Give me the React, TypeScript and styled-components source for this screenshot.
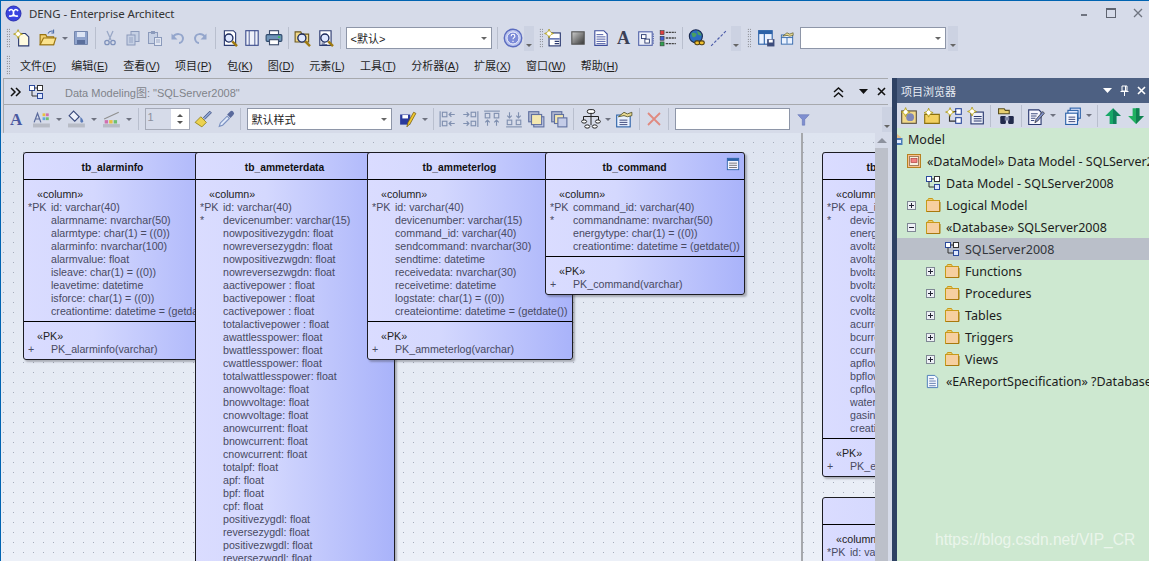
import React from 'react';
import styled, { createGlobalStyle } from 'styled-components';

const CJK = `"Noto Sans", "Noto Sans CJK SC", sans-serif`;
const ARIAL = `"Liberation Sans", "Noto Sans CJK SC", sans-serif`;

const GlobalStyle = createGlobalStyle`
  html, body {
    margin: 0;
    padding: 0;
    width: 1149px;
    height: 561px;
    overflow: hidden;
    background: #d6dbe9;
  }
`;

const Svg = ({ children, size = 16 }: { children: React.ReactNode; size?: number }) => (
  <svg width={size} height={size} viewBox="0 0 16 16" fill="none">
    {children}
  </svg>
);

const Star = ({ x = 4, y = 4, r = 3.5 }: { x?: number; y?: number; r?: number }) => (
  <>
    <path
      d={`M${x} ${y - r}L${x + r * 0.3} ${y - r * 0.3}L${x + r} ${y}L${x + r * 0.3} ${y + r * 0.3}L${x} ${y + r}L${x - r * 0.3} ${y + r * 0.3}L${x - r} ${y}L${x - r * 0.3} ${y - r * 0.3}Z`}
      fill="#fff27a"
      stroke="#a08a10"
      strokeWidth=".6"
    />
    <circle cx={x} cy={y} r={r * 0.45} fill="#fff" />
  </>
);

const Mag = () => (
  <>
    <circle cx="7" cy="8" r="3.6" fill="#dfe8ff" stroke="#1c2a5c" strokeWidth="1.2" />
    <path d="M10 11l4.2 4.2" stroke="#a07a10" strokeWidth="2.2" />
  </>
);

const Folder = () => (
  <>
    <path d="M2.500 3.500l1-2h4l1 2z" fill="#f2d070" stroke="#c79a1a" />
    <rect x="1.500" y="3.500" width="13" height="11" fill="#f6cfa0" stroke="#c79a1a" />
    <path d="M2 14.500h13V5" stroke="#a8780e" />
  </>
);

const icons: Record<string, React.ReactNode> = {
  newDoc: (
    <Svg size={18}>
      <path d="M5 4h6l3 3v8H5z" fill="#fffbe0" stroke="#2b3a70" />
      <Star x={4.500} y={4.500} r={4} />
    </Svg>
  ),
  open: (
    <Svg size={18}>
      <path d="M1 5h5l1 2h6v7H1z" fill="#f2d070" stroke="#9a7410" />
      <path d="M1 14l3-6h11l-2 6z" fill="#fbe38e" stroke="#9a7410" />
      <path d="M8 4c1-2 3-2.500 5-2M13 .5v3h-2" stroke="#4a6aa8" strokeWidth=".9" />
    </Svg>
  ),
  save: (
    <Svg>
      <path d="M1.500 1.500h13v13h-13z" fill="#8fa3cc" stroke="#7486ad" />
      <rect x="4" y="2" width="8" height="5" fill="#dce4f4" />
      <rect x="4" y="10" width="8" height="4" fill="#5b6f9c" />
    </Svg>
  ),
  cut: (
    <Svg>
      <path d="M5 1l4 9M11 1l-4 9" stroke="#9aa8c6" strokeWidth="1.300" />
      <circle cx="5" cy="12.500" r="2.200" stroke="#7f92bc" strokeWidth="1.300" />
      <circle cx="11" cy="12.500" r="2.200" stroke="#7f92bc" strokeWidth="1.300" />
    </Svg>
  ),
  copy: (
    <Svg>
      <rect x="6" y="1.500" width="8" height="10" fill="#c6d0e4" stroke="#8b9abb" />
      <rect x="2" y="5" width="8" height="10" fill="#c6d0e4" stroke="#8b9abb" />
      <path d="M4 8h4M4 10h4M4 12h4" stroke="#8b9abb" strokeWidth=".8" />
    </Svg>
  ),
  paste: (
    <Svg>
      <rect x="1.500" y="2.500" width="9" height="11" fill="#c6d0e4" stroke="#8b9abb" />
      <rect x="4" y="1" width="4" height="3" fill="#8b9abb" />
      <rect x="7.500" y="7.500" width="7" height="8" fill="#e2e7f2" stroke="#8b9abb" />
      <path d="M9 10h4M9 12h4" stroke="#8b9abb" strokeWidth=".8" />
    </Svg>
  ),
  undo: (
    <Svg>
      <path d="M3 7c3-4 9-4 10 1 0 3-2 5-4 5" stroke="#94a6cc" strokeWidth="2" />
      <path d="M1.500 3.500v6h6z" fill="#94a6cc" />
    </Svg>
  ),
  redo: (
    <Svg>
      <path d="M13 7C10 3 4 3 3 8c0 3 2 5 4 5" stroke="#94a6cc" strokeWidth="2" />
      <path d="M14.500 3.500v6h-6z" fill="#94a6cc" />
    </Svg>
  ),
  docMag: (
    <Svg size={18}>
      <path d="M3 1.500h8l2 2v11H3z" fill="#fff" stroke="#2b3a70" />
      <Mag />
    </Svg>
  ),
  pages: (
    <Svg size={18}>
      <rect x="2.500" y="1.500" width="11" height="13" fill="#eef1fa" stroke="#3d4d8c" />
      <path d="M5.500 1.500v13M10.500 1.500v13" stroke="#3d4d8c" strokeWidth=".8" />
    </Svg>
  ),
  print: (
    <Svg size={18}>
      <rect x="4" y="1.500" width="8" height="4" fill="#fff" stroke="#3d4d6c" />
      <rect x="1" y="5" width="14" height="6" rx="1" fill="#6f94b8" stroke="#2f4a6c" />
      <rect x="4" y="9.500" width="8" height="4.500" fill="#fff" stroke="#3d4d6c" />
      <rect x="11.500" y="6.500" width="2" height="1.500" fill="#3fc060" />
    </Svg>
  ),
  folderMag: (
    <Svg size={18}>
      <path d="M1 2.500h5l1 2h6v7H1z" fill="#f2d98a" stroke="#6d5a20" />
      <Mag />
    </Svg>
  ),
  listMag: (
    <Svg size={18}>
      <path d="M2.500 1.500h10v13h-10z" fill="#fff" stroke="#2b3a70" />
      <path d="M4 12.500h3M4 14h5" stroke="#2b3a70" strokeWidth=".8" />
      <Mag />
    </Svg>
  ),
  help: (
    <Svg size={20}>
      <circle cx="8" cy="8" r="7" fill="#b9c3ec" stroke="#5b6cc0" strokeWidth="1.100" />
      <circle cx="8" cy="8" r="4.800" fill="#7c8bd8" stroke="#eef0ff" strokeWidth=".8" />
      <path d="M6.500 6.500c0-2 3-2 3 0 0 1.200-1.500 1.200-1.500 2.500M8 10.200v1" stroke="#fff" strokeWidth=".9" />
    </Svg>
  ),
  starList: (
    <Svg size={18}>
      <rect x="4.500" y="3.500" width="10" height="11.500" fill="#fff" stroke="#2b3a70" />
      <rect x="5" y="8" width="9" height="1.500" fill="#6c7cb8" />
      <path d="M9.500 11h4M9.500 13h4" stroke="#2b3a70" strokeWidth=".9" />
      <Star x={4.500} y={4} r={4} />
    </Svg>
  ),
  shade: (
    <Svg size={18}>
      <defs>
        <linearGradient id="sh" x1="0" y1="0" x2="1" y2="1">
          <stop offset="0" stopColor="#d0d0d0" />
          <stop offset="1" stopColor="#333" />
        </linearGradient>
      </defs>
      <rect x="2.500" y="2.500" width="11" height="11" fill="url(#sh)" stroke="#555" />
    </Svg>
  ),
  note: (
    <Svg size={18}>
      <path d="M2.500 1.500h8l3 3v10h-11z" fill="#fff" stroke="#3d4d9c" />
      <path d="M4 5h6M4 7h8M4 9h8M4 11h8M4 13h8" stroke="#3d4d9c" strokeWidth=".8" />
    </Svg>
  ),
  boxDoc: (
    <Svg size={18}>
      <rect x="1.500" y="2.500" width="12" height="12" fill="#eef1fa" stroke="#5566aa" />
      <rect x="4" y="5" width="4" height="3.500" fill="#fff" stroke="#2b3a70" strokeWidth=".8" />
      <rect x="7" y="9" width="4" height="3.500" fill="#fff" stroke="#2b3a70" strokeWidth=".8" />
      <path d="M14.500 4v9" stroke="#5566aa" strokeDasharray="1 1" />
    </Svg>
  ),
  checks: (
    <Svg size={18}>
      <rect x="1" y="1.500" width="3.500" height="3.500" fill="#e04040" stroke="#333" strokeWidth=".5" />
      <rect x="1" y="6.500" width="3.500" height="3.500" fill="#4060d0" stroke="#333" strokeWidth=".5" />
      <rect x="1" y="11.500" width="3.500" height="3.500" fill="#30a050" stroke="#333" strokeWidth=".5" />
      <path d="M6 3h9M6 8h9M6 13h9" stroke="#444" strokeWidth="1.300" strokeDasharray="2 .6" />
    </Svg>
  ),
  globe: (
    <Svg size={18}>
      <circle cx="7" cy="6.500" r="5.800" fill="#2c6cc0" stroke="#1a2a50" />
      <path d="M3 4c2-2 3 0 4 0s1 2-1 3-2 0-3-3zM8 2c2 0 4 2 4 4l-3-1z" fill="#4aa060" />
      <rect x="6" y="10.500" width="4.500" height="3.500" rx="1.700" fill="#f0c030" stroke="#4a3a10" />
      <rect x="10" y="10.500" width="4.500" height="3.500" rx="1.700" fill="#f0c030" stroke="#4a3a10" />
    </Svg>
  ),
  dashLine: (
    <Svg size={18}>
      <path d="M1 15L15 1" stroke="#4a5aa8" strokeDasharray="2.500 1.500" />
    </Svg>
  ),
  layoutSave: (
    <Svg size={18}>
      <rect x="1.500" y="1.500" width="12" height="12" fill="#eaf2ff" stroke="#2c62a8" />
      <rect x="1.500" y="1.500" width="12" height="3" fill="#2c62a8" />
      <path d="M6.500 4.500v9" stroke="#2c62a8" />
      <rect x="9" y="9" width="6.500" height="6.500" fill="#3d4d7c" />
      <rect x="10.500" y="9.500" width="3.500" height="2.500" fill="#fff" />
    </Svg>
  ),
  handshake: (
    <Svg size={18}>
      <rect x="1.500" y="4.500" width="13" height="10.500" fill="#eaf2ff" stroke="#2c62a8" />
      <path d="M1.500 7.500h13M8 7.500v7" stroke="#2c62a8" />
      <path d="M3 6l5-4 3 1.500 4-1.500v3l-4 1-3-1z" fill="#e8d890" stroke="#4a4a20" strokeWidth=".7" />
    </Svg>
  ),
  handshakeDoc: (
    <Svg size={18}>
      <rect x="1.500" y="4.500" width="12" height="10.500" fill="#eaf2ff" stroke="#2c62a8" />
      <path d="M4 9h7M4 11h7M4 13h7" stroke="#2c3a70" strokeWidth=".8" />
      <path d="M3 6l5-4 3 1.500 4-1.500v3l-4 1-3-1z" fill="#e8d890" stroke="#4a4a20" strokeWidth=".7" />
    </Svg>
  ),
  fontColor: (
    <Svg size={18}>
      <rect x="0" y="12" width="15" height="3.500" fill="#b8bcc6" />
      <path d="M1 11l3-8 3 8M2.500 8h3" stroke="#5a6a9c" strokeWidth="1.100" />
      <rect x="8.500" y="3" width="2.500" height="2.500" fill="#e8c040" />
      <rect x="11.500" y="3" width="2.500" height="2.500" fill="#d070b0" />
      <rect x="8.500" y="6.500" width="2.500" height="2.500" fill="#60a8e0" />
      <rect x="11.500" y="6.500" width="2.500" height="2.500" fill="#70c070" />
    </Svg>
  ),
  fill: (
    <Svg size={18}>
      <rect x="0" y="12" width="15" height="3.500" fill="#b8bcc6" />
      <path d="M5 1l5 5-4 4-5-5z" fill="#eef1fa" stroke="#3a4a7c" />
      <path d="M11 6c2 2 2.500 3 2.500 4a1 1 0 0 1-2.500 0z" fill="#5a7ab8" />
    </Svg>
  ),
  lineColor: (
    <Svg size={18}>
      <rect x="0" y="12.500" width="15" height="3" fill="#b8bcc6" />
      <path d="M1 8l13-6" stroke="#909090" />
      <rect x="1.500" y="9" width="3" height="3" fill="#d070b0" />
      <rect x="5.500" y="9" width="3" height="3" fill="#e8c040" />
      <rect x="9.500" y="9" width="3" height="3" fill="#70c070" />
    </Svg>
  ),
  brush: (
    <Svg size={18}>
      <path d="M1 11l5-5 5 5-4 4z" fill="#ecd250" stroke="#8a7a10" strokeWidth=".7" />
      <path d="M8 7l6-6 1.500 1.500-6 6" fill="#8aa0d0" stroke="#3a4a7c" strokeWidth=".7" />
    </Svg>
  ),
  dropper: (
    <Svg size={18}>
      <path d="M2 14.500l1-3 6-6 2 2-6 6z" fill="#dfe8f8" stroke="#7a90c0" />
      <path d="M9 4l2.500-2.500a1.500 1.500 0 0 1 3 3L12 7z" fill="#5a6a9c" />
    </Svg>
  ),
  savePen: (
    <Svg size={18}>
      <rect x="1" y="4" width="9" height="9" fill="#2a3a9c" />
      <rect x="3" y="4.500" width="5" height="3" fill="#fff" />
      <path d="M7 15l1-4 5-9 2 1-5 9z" fill="#f0c830" stroke="#7a6010" strokeWidth=".7" />
    </Svg>
  ),
  alignA: (
    <Svg size={18}>
      <path d="M1 1v14" stroke="#8090b0" />
      <rect x="3" y="2" width="4" height="4" stroke="#8090b0" />
      <rect x="3" y="10" width="4" height="4" stroke="#8090b0" />
      <path d="M14 4H9m2-2L9 4l2 2M14 12H9m2-2l-2 2 2 2" stroke="#8090b0" />
    </Svg>
  ),
  alignB: (
    <Svg size={18}>
      <path d="M15 1v14" stroke="#8090b0" />
      <rect x="9" y="2" width="4" height="4" stroke="#8090b0" />
      <rect x="9" y="10" width="4" height="4" stroke="#8090b0" />
      <path d="M2 4h5M5 2l2 2-2 2M2 12h5M5 10l2 2-2 2" stroke="#8090b0" />
    </Svg>
  ),
  alignC: (
    <Svg size={18}>
      <path d="M1 1h14" stroke="#8090b0" />
      <rect x="2" y="3" width="4" height="4" stroke="#8090b0" />
      <rect x="10" y="3" width="4" height="4" stroke="#8090b0" />
      <path d="M4 14V9M2 11l2-2 2 2M12 14V9M10 11l2-2 2 2" stroke="#8090b0" />
    </Svg>
  ),
  alignD: (
    <Svg size={18}>
      <path d="M1 15h14" stroke="#8090b0" />
      <rect x="2" y="9" width="4" height="4" stroke="#8090b0" />
      <rect x="10" y="9" width="4" height="4" stroke="#8090b0" />
      <path d="M4 2v5M2 5l2 2 2-2M12 2v5M10 5l2 2 2-2" stroke="#8090b0" />
    </Svg>
  ),
  front: (
    <Svg size={18}>
      <rect x="6" y="6" width="9" height="9" fill="#c4cce8" stroke="#6070a0" />
      <rect x="1.500" y="1.500" width="9" height="9" fill="#b0b8d0" stroke="#6070a0" />
      <rect x="4" y="4" width="9" height="9" fill="#f4e8b0" stroke="#6070a0" />
    </Svg>
  ),
  back: (
    <Svg size={18}>
      <rect x="1.500" y="1.500" width="9" height="9" fill="#b0b8d0" stroke="#6070a0" />
      <rect x="4" y="4" width="8" height="8" fill="#f4e8b0" stroke="#6070a0" />
      <rect x="7" y="7" width="8" height="8" fill="#c4cce8" stroke="#6070a0" />
    </Svg>
  ),
  org: (
    <Svg size={20}>
      <rect x="5" y=".5" width="6" height="3" rx="1.500" fill="#fff" stroke="#222" strokeWidth=".8" />
      <path d="M8 3.500V6M2 9V6h12v3M8 6v7" stroke="#222" strokeWidth=".8" />
      <ellipse cx="2.500" cy="10" rx="2" ry="1.300" fill="#fff" stroke="#222" strokeWidth=".8" />
      <ellipse cx="13.500" cy="10" rx="2" ry="1.300" fill="#fff" stroke="#222" strokeWidth=".8" />
      <ellipse cx="5" cy="14" rx="2" ry="1.300" fill="#fff" stroke="#222" strokeWidth=".8" />
      <ellipse cx="11" cy="14" rx="2" ry="1.300" fill="#fff" stroke="#222" strokeWidth=".8" />
    </Svg>
  ),
  redX: (
    <Svg size={16}>
      <path d="M2 2l12 12M14 2L2 14" stroke="#e08a80" strokeWidth="1.800" />
    </Svg>
  ),
  funnel: (
    <Svg size={13}>
      <path d="M1 2h14L9.500 8v7h-3V8z" fill="#7f8fd0" stroke="#5a6ab0" strokeWidth=".6" />
    </Svg>
  ),
  diagram: (
    <Svg size={16}>
      <rect x="1.500" y="1.500" width="5" height="5" fill="#fff" stroke="#2c4a9c" />
      <rect x="9.500" y="1.500" width="5" height="5" fill="#fff" stroke="#333" />
      <rect x="9.500" y="9.500" width="5" height="5" fill="#dfe8ff" stroke="#2c4a9c" />
      <path d="M6.500 4h3M4 6.500V12h5.500" stroke="#333" />
    </Svg>
  ),
  addPackage: (
    <Svg size={18}>
      <rect x="1.500" y="3.500" width="13" height="11" fill="#f2d98a" stroke="#5a5040" />
      <circle cx="9" cy="9" r="3.500" fill="#8088b8" />
      <Star x={5} y={4.500} r={4} />
    </Svg>
  ),
  addFolder: (
    <Svg size={18}>
      <path d="M1.500 6.500h13v8h-13z" fill="#f2d060" stroke="#8a7010" />
      <Star x={5} y={5} r={4} />
    </Svg>
  ),
  addDiagram: (
    <Svg size={18}>
      <rect x="9.500" y="1.500" width="5" height="5" fill="#fff" stroke="#2c4a9c" />
      <rect x="9.500" y="9.500" width="5" height="5" fill="#fff" stroke="#2c4a9c" />
      <path d="M7 4h3M4 7v5.500h5.500" stroke="#333" />
      <Star x={4.500} y={4.500} r={4} />
    </Svg>
  ),
  addElement: (
    <Svg size={18}>
      <rect x="3.500" y="4.500" width="11" height="10.500" fill="#eef1fa" stroke="#2b3a70" />
      <path d="M6 8.500h7M6 10.500h7M6 12.500h7" stroke="#2b3a70" strokeWidth=".9" />
      <Star x={4.500} y={4} r={4} />
    </Svg>
  ),
  binoculars: (
    <Svg size={18}>
      <path d="M.5 1.500h5l1 1.500H10v3H.5z" fill="#e8d070" stroke="#5a5020" />
      <rect x="2" y="8" width="5" height="7" rx="1" fill="#222a4c" />
      <rect x="9" y="8" width="5" height="7" rx="1" fill="#222a4c" />
      <rect x="6" y="9" width="4" height="3" fill="#8088a8" />
    </Svg>
  ),
  editDoc: (
    <Svg size={18}>
      <path d="M1.500 2.500h9l2 2v11h-11z" fill="#f6f6ff" stroke="#2b3a70" />
      <path d="M3.500 6h6M3.500 8h5M3.500 10h4M3.500 12h3" stroke="#2b3a70" strokeWidth=".8" />
      <path d="M7 14l1-3 6-7 1.500 1.500-6 7z" fill="#8090c8" stroke="#222" strokeWidth=".6" />
    </Svg>
  ),
  windows: (
    <Svg size={18}>
      <rect x="5.500" y="1" width="9" height="9" fill="#dfe8ff" stroke="#2c62a8" />
      <rect x="3.500" y="3" width="9" height="9" fill="#dfe8ff" stroke="#2c62a8" />
      <rect x="1.500" y="5.500" width="10.500" height="10" fill="#f6f8ff" stroke="#2c62a8" />
      <path d="M4 9h6M4 11h6M4 13h6" stroke="#2b3a70" strokeWidth=".8" />
    </Svg>
  ),
  up: (
    <Svg size={18}>
      <path d="M8 1l7 7h-4v7H5V8H1z" fill="#18a868" />
      <path d="M8 1l7 7h-4v7H8z" fill="#10805a" />
    </Svg>
  ),
  down: (
    <Svg size={18}>
      <path d="M8 15L1 8h4V1h6v7h4z" fill="#20b060" />
      <path d="M8 15l7-7h-4V1H8z" fill="#108050" />
    </Svg>
  ),
  logo: (
    <svg width="17" height="17" viewBox="0 0 17 17" fill="none">
      <circle cx="8.500" cy="8.500" r="7.500" fill="#3a44e0" stroke="#2a30b0" />
      <path d="M4 6c2-3 5-1 4.500 2.500S13 11 13 11M13 6c-2-3-5-1-4.500 2.500S4 11 4 11" stroke="#fff" strokeWidth="1.600" />
    </svg>
  ),
  packageBox: (
    <Svg size={16}>
      <rect x="1.500" y="1.500" width="13" height="13" fill="#f8c090" stroke="#b88020" />
      <rect x="3.500" y="3.500" width="9" height="9" fill="#f8f0e0" stroke="#a08060" />
      <rect x="5" y="5.500" width="6" height="4" fill="#f08080" stroke="#b04040" strokeWidth=".7" />
    </Svg>
  ),
  folder: (
    <Svg size={16}>
      <Folder />
    </Svg>
  ),
  report: (
    <Svg size={15}>
      <path d="M2.500 1.500h8l3 3v10h-11z" fill="#f4f8ff" stroke="#4a7ab8" />
      <path d="M4.500 5h5M4.500 7.500h7M4.500 10h7M4.500 12.500h7" stroke="#3a5a98" strokeWidth=".8" />
    </Svg>
  ),
  tableMark: (
    <Svg size={14}>
      <rect x="1.500" y="1.500" width="13" height="13" fill="#f4f6ff" stroke="#2c62a8" />
      <rect x="1.500" y="1.500" width="13" height="3" fill="#2c62a8" />
      <path d="M3.500 7h9M3.500 9.500h9M3.500 12h9" stroke="#444" strokeWidth=".8" />
    </Svg>
  ),
  modelRoot: (
    <svg width="6" height="14" viewBox="0 0 6 14" fill="none">
      <path d="M0 2l4 3v2H0z" fill="#e8c088" />
      <path d="M0 6h5.500v7H0z" fill="#4a7ab8" />
      <path d="M0 8h4v3H0z" fill="#dfe8ff" />
    </svg>
  ),
};

const Window = styled.div`
  width: 1149px;
  height: 561px;
  box-sizing: border-box;
  border-top: 1px solid #0063b1;
  border-left: 1px solid #0063b1;
  background: #d6dbe9;
  display: flex;
  flex-direction: column;
  overflow: hidden;
  position: relative;
  font-family: ${CJK};
`;

const TitleBar = styled.div`
  height: 24px;
  display: flex;
  align-items: center;
  padding-left: 4px;
  gap: 7px;
  font-size: 11.500px;
  letter-spacing: -0.1px;
  color: #333;
  flex: none;
`;

const TitleText = styled.span`
  flex: 1;
`;

const WindowButtons = styled.div`
  display: flex;
  align-items: center;
  gap: 17px;
  padding-right: 6px;
`;

const Toolbar = styled.div`
  height: 26px;
  display: flex;
  align-items: center;
  flex: none;
`;

const Gripper = styled.span<{ $ml?: number }>`
  width: 4px;
  height: 20px;
  margin: 0 1px 0 ${(p) => p.$ml ?? 5}px;
  flex: none;
  background-image: radial-gradient(#555 0.6px, transparent 0.8px);
  background-size: 2.500px 2.500px;
`;

const Tool = styled.span<{ $w?: number; $ml?: number }>`
  width: ${(p) => p.$w ?? 22.5}px;
  margin-left: ${(p) => p.$ml ?? 0}px;
  height: 22px;
  display: flex;
  align-items: center;
  justify-content: center;
  flex: none;
`;

const Arrow = styled.span<{ $w?: number; $ml?: number }>`
  width: ${(p) => p.$w ?? 10}px;
  margin-left: ${(p) => p.$ml ?? 0}px;
  height: 22px;
  flex: none;
  display: flex;
  align-items: center;
  justify-content: center;
  &::after {
    content: '';
    border-left: 3.500px solid transparent;
    border-right: 3.500px solid transparent;
    border-top: 3.500px solid #6e7280;
  }
`;

const DropTile = styled.span<{ $ml?: number }>`
  width: 10px;
  height: 25px;
  margin-left: ${(p) => p.$ml ?? 0}px;
  background: #ccd2e2;
  flex: none;
  display: flex;
  align-items: flex-end;
  justify-content: center;
  padding-bottom: 4px;
  box-sizing: border-box;
  &::after {
    content: '';
    border-left: 3px solid transparent;
    border-right: 3px solid transparent;
    border-top: 3px solid #666;
  }
`;

const Sep = styled.span<{ $m?: number }>`
  width: 1px;
  height: 22px;
  margin: 0 ${(p) => p.$m ?? 3}px;
  background: #b9bfce;
  flex: none;
`;

const Combo = styled.div<{ $w: number; $ml?: number }>`
  width: ${(p) => p.$w}px;
  margin-left: ${(p) => p.$ml ?? 3}px;
  height: 22px;
  box-sizing: border-box;
  border: 1px solid #8e96a8;
  background: #fff;
  display: flex;
  align-items: center;
  padding: 0 4px;
  font-size: 11px;
  color: #222;
  flex: none;
  font-family: ${ARIAL};
  span {
    flex: 1;
  }
  &[data-arrow='true']::after {
    content: '';
    border-left: 3.500px solid transparent;
    border-right: 3.500px solid transparent;
    border-top: 3.500px solid #666;
  }
`;

const Menu = styled.div`
  height: 27px;
  flex: none;
  display: flex;
  align-items: center;
  font-size: 11px;
  color: #1e1e1e;
  font-family: ${ARIAL};
`;

const MenuList = styled.div`
  display: flex;
  gap: 15.200px;
  margin-left: 9px;
`;

const Main = styled.div`
  flex: 1;
  display: flex;
  min-height: 0;
`;

const DiagramPane = styled.div`
  width: 887px;
  flex: none;
  display: flex;
  flex-direction: column;
  min-height: 0;
`;

const DiagramHeader = styled.div`
  height: 27px;
  margin-left: 2px;
  box-sizing: border-box;
  border-top: 1px solid #a7a9ad;
  border-left: 1px solid #a7a9ad;
  border-bottom: 1px solid #a7a9ad;
  display: flex;
  align-items: center;
  flex: none;
  padding-left: 6px;
  font-family: ${ARIAL};
`;

const DiagramTitle = styled.span`
  flex: 1;
  font-size: 11px;
  color: #80838a;
  margin-left: 18px;
`;

const HeaderGlyphs = styled.div`
  display: grid;
  grid-template-columns: 29px 21px 14px;
  justify-items: center;
  align-items: center;
`;

const DiagramTools = styled(Toolbar)`
  height: 28px;
  margin-left: 2px;
  padding-left: 1px;
  border-left: 1px solid #a7a9ad;
`;

const Spinner = styled.div`
  width: 45px;
  height: 22px;
  margin-left: 2px;
  box-sizing: border-box;
  border: 1px solid #a5aab8;
  display: flex;
  flex: none;
  font-family: ${ARIAL};
  font-size: 11px;
  color: #8b8f9c;
`;

const SpinValue = styled.span`
  flex: 1;
  padding: 2px 0 0 2px;
`;

const SpinButtons = styled.div`
  width: 18px;
  background: #fff;
  display: flex;
  flex-direction: column;
  align-items: center;
  justify-content: space-around;
  padding: 3px 0;
  box-sizing: border-box;
`;

const SpinArrow = styled.i<{ $up?: boolean }>`
  border-left: 3px solid transparent;
  border-right: 3px solid transparent;
  ${(p) => (p.$up ? 'border-bottom: 3px solid #555;' : 'border-top: 3px solid #555;')}
`;

const CanvasRow = styled.div`
  flex: 1;
  display: flex;
  min-height: 0;
`;

const Canvas = styled.div`
  flex: 1;
  position: relative;
  overflow: hidden;
  background-color: #e9edf6;
  background-image: radial-gradient(circle at 0.5px 0.5px, #a6adbc 0.7px, transparent 0.71px),
    linear-gradient(#dee4f0 0, #e6ebf4 60%, #ecf0f8 100%);
  background-size: 10px 10px, 100% 100%;
  background-position: 2px 9px, 0 0;
`;

const PageLine = styled.div`
  position: absolute;
  left: 800px;
  top: 0;
  bottom: 0;
  width: 2px;
  background: #a6a8ac;
`;

const Scrollbar = styled.div`
  width: 13px;
  flex: none;
  background: #bcc0ca;
  display: flex;
  flex-direction: column;
`;

const ScrollUp = styled.div`
  height: 15px;
  background: #d6dbe9;
  display: flex;
  align-items: center;
  justify-content: center;
  &::after {
    content: '';
    border-left: 5px solid transparent;
    border-right: 5px solid transparent;
    border-bottom: 5px solid #8d929e;
  }
`;

const Splitter = styled.div`
  width: 5px;
  margin-left: 4px;
  flex: none;
  background: #2e4163;
`;

const BrowserPane = styled.div`
  flex: 1;
  display: flex;
  flex-direction: column;
  min-height: 0;
  min-width: 0;
`;

const BrowserTitle = styled.div`
  height: 25px;
  flex: none;
  background: #4d6082;
  color: #e8ecf4;
  display: flex;
  align-items: center;
  padding: 0 3px 0 4px;
  font-size: 11px;
`;

const BrowserTitleText = styled.span`
  flex: 1;
`;

const BrowserTitleIcons = styled.div`
  display: flex;
  align-items: center;
  gap: 7px;
`;

const BrowserTools = styled(Toolbar)`
  height: 25px;
  padding-left: 1px;
`;

const Tree = styled.div`
  flex: 1;
  background: #cde8d0;
  overflow: hidden;
  font-size: 12.500px;
  color: #1c1c1c;
`;

const Row = styled.div<{ $pad: number; $selected?: boolean }>`
  height: 22px;
  display: flex;
  align-items: center;
  padding-left: ${(p) => p.$pad}px;
  white-space: nowrap;
  background: ${(p) => (p.$selected ? '#babfc9' : 'transparent')};
  color: ${(p) => (p.$selected ? '#33363c' : '#1c1c1c')};
`;

const Expander = styled.span`
  width: 9px;
  height: 9px;
  box-sizing: border-box;
  border: 1px solid #7f8794;
  background: #eef1f6;
  margin-right: 9px;
  flex: none;
  position: relative;
  &::before {
    content: '';
    position: absolute;
    left: 1px;
    right: 1px;
    top: 3px;
    height: 1px;
    background: #223;
  }
  &[data-open='false']::after {
    content: '';
    position: absolute;
    top: 1px;
    bottom: 1px;
    left: 3px;
    width: 1px;
    background: #223;
  }
`;

const TreeIcon = styled.span<{ $w?: number }>`
  width: ${(p) => p.$w ?? 21}px;
  display: flex;
  align-items: center;
  flex: none;
`;

const Watermark = styled.div`
  position: absolute;
  left: 934px;
  top: 530px;
  font-family: ${ARIAL};
  font-size: 15.600px;
  color: rgba(255, 255, 255, 0.6);
`;

const TableBox = styled.div<{ $x: number; $y: number; $w: number }>`
  position: absolute;
  left: ${(p) => p.$x - 1}px;
  top: ${(p) => p.$y - 133}px;
  width: ${(p) => p.$w}px;
  box-sizing: border-box;
  border: 1px solid #1c1c22;
  border-radius: 3px;
  box-shadow: 2px 2px 2px rgba(60, 60, 70, 0.35);
  background: linear-gradient(90deg, #dadcff 0%, #d4d8fe 35%, #a9b3fa 100%);
  font-family: ${ARIAL};
  font-size: 10.670px;
  color: #484a62;
`;

const TableHead = styled.div`
  height: 24px;
  padding: 2px 21px 0 0;
  border-bottom: 1px solid #000;
  display: flex;
  align-items: center;
  justify-content: center;
  font-size: 10.300px;
  font-weight: 700;
  color: #111;
  position: relative;
`;

const TableMark = styled.span`
  position: absolute;
  right: 4px;
  top: 4px;
  display: flex;
`;

const Section = styled.div`
  padding: 8px 0 3px;
  & + & {
    border-top: 1px solid #000;
  }
`;

const Stereo = styled.div`
  height: 13px;
  line-height: 13px;
  padding-left: 13px;
  color: #222;
`;

const Field = styled.div`
  height: 13px;
  line-height: 13px;
  display: flex;
  white-space: nowrap;
  overflow: hidden;
`;

const Marker = styled.span`
  width: 23px;
  padding-left: 4px;
  flex: none;
`;

type TableProps = {
  x: number;
  y: number;
  w: number;
  name: string;
  mark?: boolean;
  fields: [string, string][];
  pk?: string;
};

const Table = ({ x, y, w, name, mark, fields, pk }: TableProps) => (
  <TableBox $x={x} $y={y} $w={w}>
    <TableHead>
      {name}
      {mark && <TableMark>{icons.tableMark}</TableMark>}
    </TableHead>
    <Section>
      <Stereo>«column»</Stereo>
      {fields.map(([m, f], i) => (
        <Field key={i}>
          <Marker>{m}</Marker>
          {f}
        </Field>
      ))}
    </Section>
    {pk && (
      <Section>
        <Stereo>«PK»</Stereo>
        <Field>
          <Marker>+</Marker>
          {pk}
        </Field>
      </Section>
    )}
  </TableBox>
);

const plain = (names: string[]): [string, string][] => names.map((n) => ['', n]);

const alarmFields: [string, string][] = [
  ['*PK', 'id: varchar(40)'],
  ...plain([
    'alarmname: nvarchar(50)',
    'alarmtype: char(1) = ((0))',
    'alarminfo: nvarchar(100)',
    'alarmvalue: float',
    'isleave: char(1) = ((0))',
    'leavetime: datetime',
    'isforce: char(1) = ((0))',
    'creationtime: datetime = (getdate())',
  ]),
];

const ammeterFields: [string, string][] = [
  ['*PK', 'id: varchar(40)'],
  ['*', 'devicenumber: varchar(15)'],
  ...plain([
    'nowpositivezygdn: float',
    'nowreversezygdn: float',
    'nowpositivezwgdn: float',
    'nowreversezwgdn: float',
    'aactivepower : float',
    'bactivepower : float',
    'cactivepower : float',
    'totalactivepower : float',
    'awattlesspower: float',
    'bwattlesspower: float',
    'cwattlesspower: float',
    'totalwattlesspower: float',
    'anowvoltage: float',
    'bnowvoltage: float',
    'cnowvoltage: float',
    'anowcurrent: float',
    'bnowcurrent: float',
    'cnowcurrent: float',
    'totalpf: float',
    'apf: float',
    'bpf: float',
    'cpf: float',
    'positivezygdl: float',
    'reversezygdl: float',
    'positivezwgdl: float',
    'reversezwgdl: float',
  ]),
];

const logFields: [string, string][] = [
  ['*PK', 'id: varchar(40)'],
  ...plain([
    'devicenumber: varchar(15)',
    'command_id: varchar(40)',
    'sendcommand: nvarchar(30)',
    'sendtime: datetime',
    'receivedata: nvarchar(30)',
    'receivetime: datetime',
    'logstate: char(1) = ((0))',
    'createiontime: datetime = (getdate())',
  ]),
];

const commandFields: [string, string][] = [
  ['*PK', 'command_id: varchar(40)'],
  ['*', 'commandname: nvarchar(50)'],
  ...plain(['energytype: char(1) = ((0))', 'creationtime: datetime = (getdate())']),
];

const epaFields: [string, string][] = [
  ['*PK', 'epa_id: varchar(40)'],
  ['*', 'devicenumber: varchar(15)'],
  ...plain([
    'energytype: char(1)',
    'avoltage: float',
    'avoltagerate: float',
    'bvoltage: float',
    'bvoltagerate: float',
    'cvoltage: float',
    'cvoltagerate: float',
    'acurrent: float',
    'bcurrent: float',
    'ccurrent: float',
    'apflow: float',
    'bpflow: float',
    'cpflow: float',
    'waterflow: float',
    'gasinflow: float',
    'creationtime: datetime',
  ]),
];

const TreeRow = ({
  pad,
  label,
  icon,
  open,
  selected,
  iconWidth,
}: {
  pad: number;
  label: string;
  icon?: string;
  open?: boolean;
  selected?: boolean;
  iconWidth?: number;
}) => (
  <Row $pad={pad} $selected={selected}>
    {open !== undefined && <Expander data-open={open} />}
    {icon && <TreeIcon $w={iconWidth}>{icons[icon]}</TreeIcon>}
    {label}
  </Row>
);

const menuItems: [string, string][] = [
  ['文件', 'F'],
  ['编辑', 'E'],
  ['查看', 'V'],
  ['项目', 'P'],
  ['包', 'K'],
  ['图', 'D'],
  ['元素', 'L'],
  ['工具', 'T'],
  ['分析器', 'A'],
  ['扩展', 'X'],
  ['窗口', 'W'],
  ['帮助', 'H'],
];

const Glyph = styled.span<{ $size?: number }>`
  font-family: "Liberation Serif", serif;
  font-weight: 700;
  font-size: ${(p) => p.$size ?? 17}px;
  line-height: 1;
  color: #4a58a0;
`;

const DarkGlyph = styled(Glyph)`
  color: #3a3f55;
`;

const HeaderChevron = () => (
  <svg width="13" height="12" viewBox="0 0 13 12" fill="none">
    <path d="M2 6l4.500-4L11 6M2 11l4.500-4L11 11" stroke="#111" strokeWidth="1.500" />
  </svg>
);

const HeaderDouble = () => (
  <svg width="12" height="10" viewBox="0 0 12 10" fill="none">
    <path d="M1 1l4 4-4 4M6 1l4 4-4 4" stroke="#111" strokeWidth="1.500" />
  </svg>
);

const Cross = ({ color = '#111' }: { color?: string }) => (
  <svg width="9" height="9" viewBox="0 0 9 9" fill="none">
    <path d="M1 1l7 7M8 1L1 8" stroke={color} strokeWidth="1.600" />
  </svg>
);

const Tri = ({ color = '#111' }: { color?: string }) => (
  <svg width="9" height="6" viewBox="0 0 9 6">
    <path d="M0 0h9L4.500 5z" fill={color} />
  </svg>
);

const Pin = () => (
  <svg width="11" height="11" viewBox="0 0 11 11" fill="none">
    <path d="M3 1h5v5H3zM1.500 6.500h8M5.500 6.500V11M6.500 1v5" stroke="#fff" />
  </svg>
);

export default function App() {
  return (
    <>
      <GlobalStyle />
      <Window>
        <TitleBar>
          {icons.logo}
          <TitleText>DENG - Enterprise Architect</TitleText>
          <WindowButtons>
            <svg width="10" height="10" viewBox="0 0 10 10">
              <rect x="2" y="6" width="6" height="2" fill="#6f7480" />
            </svg>
            <svg width="10" height="10" viewBox="0 0 10 10" fill="none">
              <rect x=".5" y=".5" width="9" height="9" stroke="#5f6470" />
              <rect x=".5" y=".5" width="9" height="1.500" fill="#5f6470" />
            </svg>
            <svg width="10" height="10" viewBox="0 0 10 10" fill="none">
              <path d="M1 1l8 8M9 1L1 9" stroke="#6f7480" strokeWidth="1.300" />
            </svg>
          </WindowButtons>
        </TitleBar>

        <Toolbar>
          <Gripper $ml={5} />
          <Tool>{icons.newDoc}</Tool>
          <Tool $w={24} $ml={2}>{icons.open}</Tool>
          <Arrow $w={10} />
          <Tool>{icons.save}</Tool>
          <Sep />
          <Tool>{icons.cut}</Tool>
          <Tool>{icons.copy}</Tool>
          <Tool>{icons.paste}</Tool>
          <Tool>{icons.undo}</Tool>
          <Tool>{icons.redo}</Tool>
          <Sep />
          <Tool $w={22.200}>{icons.docMag}</Tool>
          <Tool $w={22.200}>{icons.pages}</Tool>
          <Tool $w={22.200}>{icons.print}</Tool>
          <Sep />
          <Tool>{icons.folderMag}</Tool>
          <Tool>{icons.listMag}</Tool>
          <Sep />
          <Combo $w={146} $ml={1.500} data-arrow="true">
            <span>&lt;默认&gt;</span>
          </Combo>
          <Sep $m={5} />
          <Tool $w={20}>{icons.help}</Tool>
          <DropTile $ml={1} />
          <Gripper $ml={5} />
          <Tool $w={19.500}>{icons.starList}</Tool>
          <Tool $w={23.500} $ml={3}>{icons.shade}</Tool>
          <Tool $w={23}>{icons.note}</Tool>
          <Tool $w={22}>
            <DarkGlyph $size={18}>A</DarkGlyph>
          </Tool>
          <Tool $w={22}>{icons.boxDoc}</Tool>
          <Tool $w={22}>{icons.checks}</Tool>
          <Sep />
          <Tool $w={22}>{icons.globe}</Tool>
          <Tool $w={23}>{icons.dashLine}</Tool>
          <DropTile />
          <Gripper $ml={6} />
          <Tool $w={28}>{icons.layoutSave}</Tool>
          <Tool $w={14}>{icons.handshake}</Tool>
          <Combo $w={146} $ml={6} data-arrow="true">
            <span />
          </Combo>
          <DropTile $ml={2} />
        </Toolbar>

        <Menu>
          <Gripper $ml={5} />
          <MenuList>
            {menuItems.map(([label, key]) => (
              <span key={key}>
                {label}(<u>{key}</u>)
              </span>
            ))}
          </MenuList>
        </Menu>

        <Main>
          <DiagramPane>
            <DiagramHeader>
              <HeaderDouble />
              <Tool $w={22} $ml={3}>{icons.diagram}</Tool>
              <DiagramTitle>Data Modeling图: "SQLServer2008"</DiagramTitle>
              <HeaderGlyphs>
                <HeaderChevron />
                <Tri />
                <Cross />
              </HeaderGlyphs>
            </DiagramHeader>
            <DiagramTools>
              <Tool>
                <Glyph>A</Glyph>
              </Tool>
              <Tool $w={24} $ml={2}>{icons.fontColor}</Tool>
              <Arrow />
              <Tool $w={24} $ml={1}>{icons.fill}</Tool>
              <Arrow />
              <Tool $w={24} $ml={1}>{icons.lineColor}</Tool>
              <Arrow />
              <Sep $m={4} />
              <Spinner>
                <SpinValue>1</SpinValue>
                <SpinButtons>
                  <SpinArrow $up />
                  <SpinArrow />
                </SpinButtons>
              </Spinner>
              <Tool $w={24} $ml={1}>{icons.brush}</Tool>
              <Tool>{icons.dropper}</Tool>
              <Sep />
              <Combo $w={145} $ml={2.500} data-arrow="true">
                <span>默认样式</span>
              </Combo>
              <Tool $w={24} $ml={4}>{icons.savePen}</Tool>
              <Arrow />
              <Sep />
              <Tool $w={22.200}>{icons.alignA}</Tool>
              <Tool $w={22.200}>{icons.alignB}</Tool>
              <Tool $w={22.200}>{icons.alignC}</Tool>
              <Tool $w={22.200}>{icons.alignD}</Tool>
              <Tool $w={22.200}>{icons.front}</Tool>
              <Tool $w={22.200}>{icons.back}</Tool>
              <Sep />
              <Tool $w={24} $ml={2.500}>{icons.org}</Tool>
              <Arrow />
              <Tool>{icons.handshakeDoc}</Tool>
              <Sep />
              <Tool $w={22}>{icons.redX}</Tool>
              <Sep />
              <Combo $w={115} />
              <Tool $w={28}>{icons.funnel}</Tool>
              <DropTile $ml={64} />
            </DiagramTools>
            <CanvasRow>
              <Canvas>
                <PageLine />
                <Table x={23} y={152} w={200} name="tb_alarminfo" fields={alarmFields} pk="PK_alarminfo(varchar)" />
                <Table x={195} y={152} w={200} name="tb_ammeterdata" fields={ammeterFields} />
                <Table x={367} y={152} w={206} name="tb_ammeterlog" fields={logFields} pk="PK_ammeterlog(varchar)" />
                <Table x={545} y={152} w={200} name="tb_command" mark fields={commandFields} pk="PK_command(varchar)" />
                <Table x={822} y={152} w={200} name="tb_energyanalysis" fields={epaFields} pk="PK_epa(varchar)" />
                <Table x={822} y={497} w={200} name="tb_energydata" fields={[['*PK', 'id: varchar(40)']]} />
              </Canvas>
              <Scrollbar>
                <ScrollUp />
              </Scrollbar>
            </CanvasRow>
          </DiagramPane>
          <Splitter />
          <BrowserPane>
            <BrowserTitle>
              <BrowserTitleText>项目浏览器</BrowserTitleText>
              <BrowserTitleIcons>
                <Tri color="#fff" />
                <Pin />
                <Cross color="#fff" />
              </BrowserTitleIcons>
            </BrowserTitle>
            <BrowserTools>
              <Tool>{icons.addPackage}</Tool>
              <Tool>{icons.addFolder}</Tool>
              <Tool>{icons.addDiagram}</Tool>
              <Tool $w={21}>{icons.addElement}</Tool>
              <Sep />
              <Tool $ml={2}>{icons.binoculars}</Tool>
              <Sep />
              <Tool>{icons.editDoc}</Tool>
              <Arrow />
              <Tool $ml={4}>{icons.windows}</Tool>
              <Arrow />
              <Sep />
              <Tool $ml={1}>{icons.up}</Tool>
              <Tool>{icons.down}</Tool>
            </BrowserTools>
            <Tree>
              <TreeRow pad={0} icon="modelRoot" iconWidth={11} label="Model" />
              <TreeRow pad={9} icon="packageBox" label="«DataModel» Data Model - SQLServer2008" />
              <TreeRow pad={28} icon="diagram" label="Data Model - SQLServer2008" />
              <TreeRow pad={10} icon="folder" open={false} label="Logical Model" />
              <TreeRow pad={10} icon="folder" open label="«Database» SQLServer2008" />
              <TreeRow pad={47} icon="diagram" label="SQLServer2008" selected />
              <TreeRow pad={29} icon="folder" open={false} label="Functions" />
              <TreeRow pad={29} icon="folder" open={false} label="Procedures" />
              <TreeRow pad={29} icon="folder" open={false} label="Tables" />
              <TreeRow pad={29} icon="folder" open={false} label="Triggers" />
              <TreeRow pad={29} icon="folder" open={false} label="Views" />
              <TreeRow pad={28} icon="report" label="«EAReportSpecification» ?Database" />
            </Tree>
          </BrowserPane>
        </Main>
        <Watermark>https://blog.csdn.net/VIP_CR</Watermark>
      </Window>
    </>
  );
}
